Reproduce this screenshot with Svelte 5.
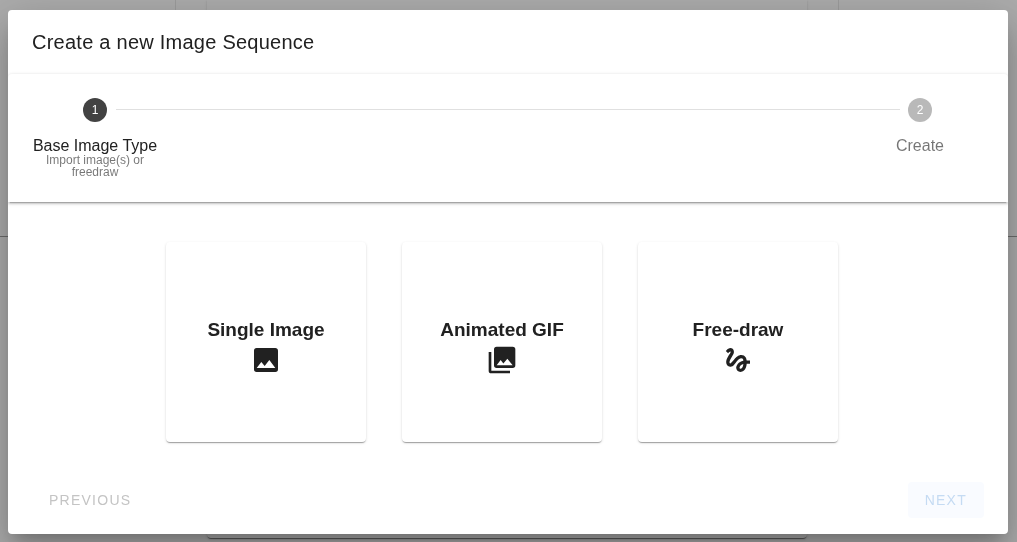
<script>
  const steps = [
    { n: 1, label: 'Base Image Type', hint: 'Import image(s) or freedraw', active: true },
    { n: 2, label: 'Create', hint: '', active: false }
  ];
  const choices = [
    {
      label: 'Single Image',
      icon: 'M8.5,13.5L11,16.5L14.5,12L19,18H5M21,19V5C21,3.89 20.1,3 19,3H5A2,2 0 0,0 3,5V19A2,2 0 0,0 5,21H19A2,2 0 0,0 21,19Z'
    },
    {
      label: 'Animated GIF',
      icon: 'M22,16V4A2,2 0 0,0 20,2H8A2,2 0 0,0 6,4V16A2,2 0 0,0 8,18H20A2,2 0 0,0 22,16M11,12L13.03,14.71L16,11L20,16H8M2,6V20A2,2 0 0,0 4,22H18V20H4V6'
    },
    {
      label: 'Free-draw',
      icon: 'M4.59 6.89C5.29 6.18 6 5.54 6.3 5.67C6.8 5.87 6.3 6.7 6 7.19C5.75 7.61 3.14 11.08 3.14 13.5C3.14 14.78 3.62 15.84 4.5 16.5C5.23 17.04 6.2 17.21 7.12 16.94C8.19 16.63 9.07 15.54 10.18 14.17C11.39 12.68 13 10.73 14.26 10.73C15.89 10.73 15.91 11.74 16 12.5C12.24 13.16 10.64 16.19 10.64 17.89C10.64 19.59 12.08 21 13.85 21C15.5 21 18.14 19.65 18.54 14.88H21V12.38H18.53C18.38 10.73 17.44 8.18 14.5 8.18C12.25 8.18 10.31 10.09 9.56 11C9 11.75 7.5 13.5 7.27 13.74C7 14.04 6.59 14.58 6.16 14.58C5.71 14.58 5.44 13.75 5.8 12.66C6.15 11.57 7.2 9.8 7.65 9.14C8.43 8 8.95 7.22 8.95 5.86C8.95 3.69 7.31 3 6.44 3C5.12 3 3.97 4 3.72 4.25C3.36 4.61 3.06 4.91 2.84 5.18L4.59 6.89M13.88 18.56C13.57 18.56 13.14 18.29 13.14 17.91C13.14 17.2 13.89 15.6 16.03 15.04C15.73 17.73 14.72 18.56 13.88 18.56Z'
    }
  ];
</script>

<div class="page">
  <div class="backdrop" aria-hidden="true">
    <div class="pane"></div>
    <div class="sheet"></div>
    <div class="pane"></div>
  </div>

  <div class="dialog" role="dialog" aria-labelledby="dialog-title">
    <h1 id="dialog-title">Create a new Image Sequence</h1>

    <div class="stepper">
      <ol class="steps">
        {#each steps as step}
          <li class="step" class:active={step.active}>
            <span class="num">{step.n}</span>
            <span class="label">{step.label}</span>
            {#if step.hint}<small>{step.hint}</small>{/if}
          </li>
        {/each}
      </ol>

      <div class="choices">
        {#each choices as choice}
          <button class="choice" type="button">
            <span>{choice.label}</span>
            <svg viewBox="0 0 24 24" aria-hidden="true"><path d={choice.icon} fill-rule="evenodd" /></svg>
          </button>
        {/each}
      </div>

      <div class="actions">
        <button class="btn" type="button" disabled>Previous</button>
        <button class="btn next" type="button" disabled>Next</button>
      </div>
    </div>
  </div>
</div>

<style>
  :global(body) {
    margin: 0;
    background: #acacac;
  }
  .page {
    display: grid;
    min-height: 100vh;
    overflow: hidden;
    font-family: "Liberation Sans", Arial, sans-serif;
    color: #212121;
  }
  .page > * {
    grid-area: 1 / 1;
  }
  .backdrop {
    display: grid;
    grid-template-columns: 1fr 600px 1fr;
    column-gap: 31px;
    margin-left: -3px;
    padding-bottom: 4px;
  }
  .pane {
    height: 236px;
    border-bottom: 1px solid #6c6c6c;
    border-right: 1px solid #9c9c9c;
  }
  .pane:last-child {
    border-right: 0;
    border-left: 1px solid #9c9c9c;
  }
  .sheet {
    border-radius: 0 0 4px 4px;
    box-shadow: 0 2px 1px -1px rgba(0, 0, 0, 0.4), 0 1px 1px rgba(0, 0, 0, 0.14), 0 1px 3px rgba(0, 0, 0, 0.12);
  }
  .dialog {
    align-self: start;
    margin: 10px 9px 8px 8px;
    border-radius: 4px;
    background: #fff;
    box-shadow: 0 11px 15px -7px rgba(0, 0, 0, 0.2), 0 24px 38px 3px rgba(0, 0, 0, 0.14), 0 9px 46px 8px rgba(0, 0, 0, 0.12);
    will-change: transform;
  }
  h1 {
    margin: 0;
    padding: 16px 24px;
    font-size: 20px;
    font-weight: 400;
    line-height: 32px;
    letter-spacing: 0.0125em;
  }
  .stepper {
    border-radius: 4px;
    box-shadow: 0 0 3px rgba(0, 0, 0, 0.12);
    clip-path: inset(-3px 0 0 0);
  }
  .steps {
    position: relative;
    display: flex;
    justify-content: space-between;
    margin: 0;
    padding: 0;
    list-style: none;
    box-shadow: 0 3px 1px -2px rgba(0, 0, 0, 0.2), 0 2px 2px rgba(0, 0, 0, 0.14), 0 1px 5px rgba(0, 0, 0, 0.12);
    clip-path: inset(0 0 -8px 0);
  }
  .steps::before {
    content: "";
    position: absolute;
    top: 35px;
    left: 108px;
    right: 108px;
    height: 1px;
    background: #e0e0e0;
  }
  .step {
    box-sizing: border-box;
    display: flex;
    flex-direction: column;
    align-items: center;
    width: 174px;
    padding: 24px;
    color: rgba(0, 0, 0, 0.54);
    text-align: center;
  }
  .step:last-child {
    width: 176px;
  }
  .num {
    width: 24px;
    margin-bottom: 16px;
    border-radius: 50%;
    background: #b9b9b9;
    color: #fff;
    font-size: 12px;
    line-height: 24px;
  }
  .label {
    font-size: 16px;
    line-height: 16px;
    white-space: nowrap;
  }
  small {
    font-size: 12px;
    line-height: 12px;
  }
  .active .num {
    background: #424242;
  }
  .active .label {
    color: #212121;
  }
  .choices {
    display: flex;
    justify-content: center;
    gap: 36px;
    padding: 40px 36px 40px 24px;
  }
  .choice {
    display: flex;
    flex-direction: column;
    align-items: center;
    justify-content: center;
    box-sizing: border-box;
    width: 200px;
    height: 200px;
    padding: 8px 0 0;
    border: 0;
    border-radius: 4px;
    background: #fff;
    color: #212121;
    font: bold 19px/28px "Liberation Sans", Arial, sans-serif;
    box-shadow: 0 2px 1px -1px rgba(0, 0, 0, 0.2), 0 1px 1px rgba(0, 0, 0, 0.14), 0 1px 3px rgba(0, 0, 0, 0.12);
  }
  svg {
    width: 32px;
    height: 32px;
    fill: currentColor;
  }
  .actions {
    display: flex;
    justify-content: space-between;
    padding: 0 24px 16px;
  }
  .btn {
    height: 36px;
    padding: 0 17px;
    border: 0;
    border-radius: 4px;
    background: transparent;
    color: #c4c4c4;
    font: 14px/36px "Liberation Sans", Arial, sans-serif;
    letter-spacing: 0.0892857143em;
    text-transform: uppercase;
  }
  .next {
    background: #f9fbff;
    color: #c5dbf3;
  }
</style>
